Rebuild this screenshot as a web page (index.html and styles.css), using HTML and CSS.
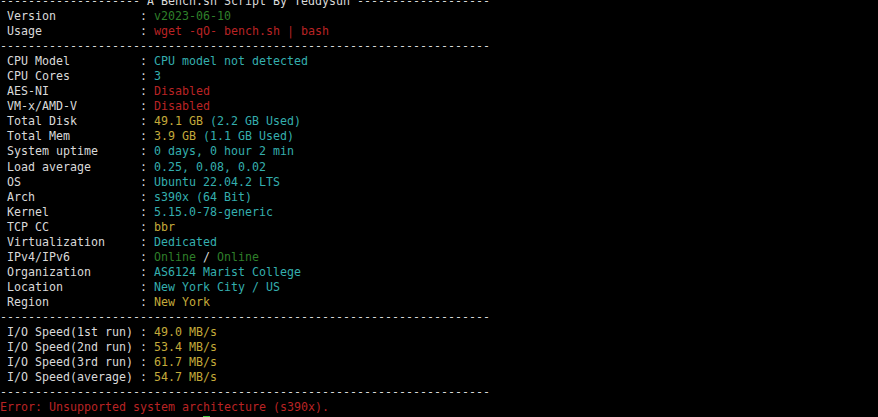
FILE: index.html
```html
<!DOCTYPE html>
<html>
<head>
<meta charset="utf-8">
<link rel="stylesheet" href="styles.css">
</head>
<body>
<pre class="term">-------------------- A Bench.sh Script By Teddysun -------------------
 Version            : <span class="g">v2023-06-10</span>
 Usage              : <span class="r">wget -qO- bench.sh | bash</span>
----------------------------------------------------------------------
 CPU Model          : <span class="c">CPU model not detected</span>
 CPU Cores          : <span class="c">3</span>
 AES-NI             : <span class="r">Disabled</span>
 VM-x/AMD-V         : <span class="r">Disabled</span>
 Total Disk         : <span class="y">49.1 GB</span> <span class="c">(2.2 GB Used)</span>
 Total Mem          : <span class="y">3.9 GB</span> <span class="c">(1.1 GB Used)</span>
 System uptime      : <span class="c">0 days, 0 hour 2 min</span>
 Load average       : <span class="c">0.25, 0.08, 0.02</span>
 OS                 : <span class="c">Ubuntu 22.04.2 LTS</span>
 Arch               : <span class="c">s390x (64 Bit)</span>
 Kernel             : <span class="c">5.15.0-78-generic</span>
 TCP CC             : <span class="y">bbr</span>
 Virtualization     : <span class="c">Dedicated</span>
 IPv4/IPv6          : <span class="g">Online</span> / <span class="g">Online</span>
 Organization       : <span class="c">AS6124 Marist College</span>
 Location           : <span class="c">New York City / US</span>
 Region             : <span class="y">New York</span>
----------------------------------------------------------------------
 I/O Speed(1st run) : <span class="y">49.0 MB/s</span>
 I/O Speed(2nd run) : <span class="y">53.4 MB/s</span>
 I/O Speed(3rd run) : <span class="y">61.7 MB/s</span>
 I/O Speed(average) : <span class="y">54.7 MB/s</span>
----------------------------------------------------------------------
<span class="r">Error: Unsupported system architecture (s390x).</span>
                             <span class="cursor"> </span></pre>
</body>
</html>
```
FILE: styles.css
```css
html, body {
  margin: 0;
  padding: 0;
  background: #000;
  height: 100%;
  overflow: hidden;
}
.term {
  margin: -6px 0 0 0;
  padding: 0;
  font-family: "DejaVu Sans Mono", monospace;
  font-size: 11.63px;
  line-height: 15.04px;
  color: #d9d9d9;
  white-space: pre;
}
.g { color: #2f7f2a; }
.r { color: #b92324; }
.c { color: #34aeae; }
.y { color: #c4aa3a; }
.cursor {
  display: inline-block;
  width: 5px;
  height: 12px;
  border: 1px solid #3fbf3f;
  vertical-align: top;
  margin-top: 1px;
}
```
